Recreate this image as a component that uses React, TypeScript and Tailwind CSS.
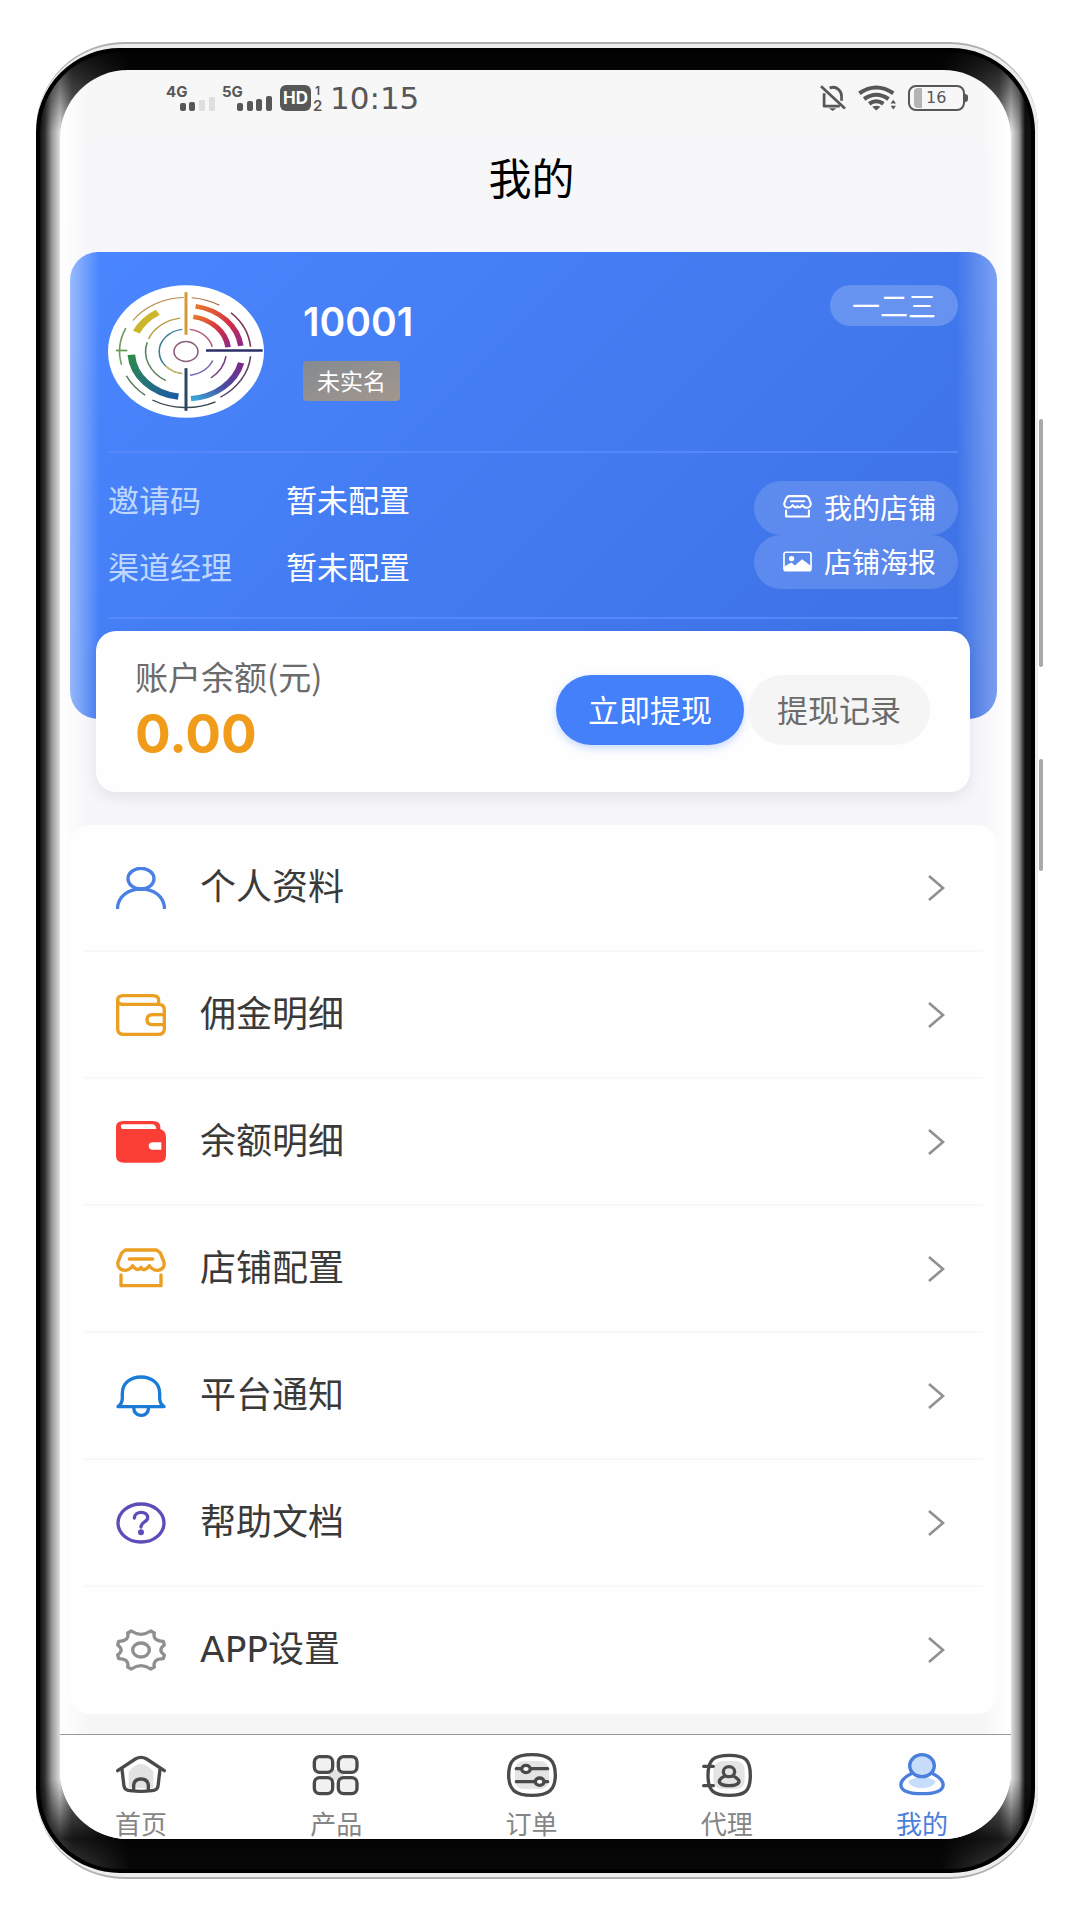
import type { ReactNode } from "react"

const strokeProps = {
  fill: "none",
  stroke: "currentColor",
  strokeWidth: 10,
  strokeLinecap: "round" as const,
  strokeLinejoin: "round" as const,
}

function arc(r: number, from: number, to: number) {
  const rad = Math.PI / 180
  const x0 = r * Math.cos(from * rad)
  const y0 = r * Math.sin(from * rad)
  const x1 = r * Math.cos(to * rad)
  const y1 = r * Math.sin(to * rad)
  return `M${x0} ${y0}A${r} ${r} 0 ${to - from > 180 ? 1 : 0} 1 ${x1} ${y1}`
}

function AvatarLogo() {
  return (
    <svg viewBox="-234 -199 468 398" className="h-[133px] w-[156px] shrink-0" aria-hidden="true">
      <defs>
        <linearGradient id="warm" x1="0" y1="0" x2="1" y2="1">
          <stop offset="0" stopColor="#e8772a" />
          <stop offset="0.6" stopColor="#cf2e48" />
          <stop offset="1" stopColor="#8c2a86" />
        </linearGradient>
        <linearGradient id="green" x1="0" y1="0" x2="1" y2="1">
          <stop offset="0" stopColor="#2f8a4a" />
          <stop offset="1" stopColor="#1b5aa8" />
        </linearGradient>
        <linearGradient id="violet" x1="0" y1="1" x2="1" y2="0">
          <stop offset="0" stopColor="#3aa9da" />
          <stop offset="0.5" stopColor="#4b4aa0" />
          <stop offset="1" stopColor="#7a2a86" />
        </linearGradient>
      </defs>
      <ellipse rx="234" ry="199" fill="#fff" />
      <g transform="scale(1.2 1)" fill="none">
        <circle r="30" stroke="#8d6080" strokeWidth="4" />
        <path d={arc(67, 98, 262)} stroke="#3c7f96" strokeWidth="4" />
        <path d={arc(67, 98, 140)} stroke="#d8bd54" strokeWidth="4" />
        <path d={arc(67, 278, 348)} stroke="#b5557c" strokeWidth="4" />
        <path d={arc(72, 22, 82)} stroke="#7668b4" strokeWidth="4" />
        <path d={arc(101, 120, 196)} stroke="#5c8560" strokeWidth="4" />
        <path d={arc(101, 202, 262)} stroke="#b3a14a" strokeWidth="4" />
        <path d={arc(101, 8, 52)} stroke="#76427f" strokeWidth="4" />
        <path d={arc(106, 280, 353)} stroke="url(#warm)" strokeWidth="14" />
        <path d={arc(138, 280, 353)} stroke="url(#warm)" strokeWidth="14" />
        <path d={arc(137, 205, 239)} stroke="#cdb62c" strokeWidth="19" />
        <path d={arc(137, 98, 176)} stroke="url(#green)" strokeWidth="19" />
        <path d={arc(142, 14, 85)} stroke="url(#violet)" strokeWidth="16" />
        <path d={arc(162, 215, 268)} stroke="#b88b4a" strokeWidth="3" />
        <path d={arc(162, 275, 301)} stroke="#a6653a" strokeWidth="3" />
        <path d={arc(162, 314, 355)} stroke="#7c3455" strokeWidth="4" />
        <path d={arc(162, 5, 58)} stroke="#5d4468" strokeWidth="4" />
        <path d={arc(168, 64, 120)} stroke="#37474f" strokeWidth="4" />
        <path d={arc(166, 128, 154)} stroke="#5a7a5a" strokeWidth="4" />
        <path d={arc(166, 166, 205)} stroke="#6f9a62" strokeWidth="4" />
      </g>
      <path d="M0 -178V-50" stroke="#d39a35" strokeWidth="9" />
      <path d="M60 -3H230" stroke="#2c2f6a" strokeWidth="8" />
      <path d="M0 50V178" stroke="#2b4562" strokeWidth="9" />
      <path d="M-210 -3H-176" stroke="#5f9a4c" strokeWidth="5" />
    </svg>
  )
}

function MenuIcon({ color, children }: { color: string; children: ReactNode }) {
  return (
    <svg viewBox="0 0 150 126" className={`h-[42px] w-[50px] shrink-0 ${color}`} aria-hidden="true">
      <g {...strokeProps}>{children}</g>
    </svg>
  )
}

function StorePaths() {
  return (
    <>
      <path d="M28 6H122L133 15 144 42C147 56 138 67 124 67 114 67 106 62 100 53 94 62 86 67 78 63L75 58 71 63C64 67 56 62 50 53 44 62 36 67 27 67 12 67 3 56 6 42L17 15Z" />
      <path d="M40 33H110" />
      <path d="M15 81V113H135V81" />
    </>
  )
}

const menu = [
  {
    label: "个人资料",
    color: "text-[#4a80e4]",
    icon: (
      <>
        <ellipse cx="75" cy="35" rx="39" ry="31" />
        <path d="M4 126C6 88 36 66 75 66S144 88 146 126" />
      </>
    ),
  },
  {
    label: "佣金明细",
    color: "text-[#eb9f22]",
    icon: (
      <>
        <path d="M128 31V18Q128 5 110 5H22Q5 5 5 18V104Q5 121 24 121H126Q145 121 145 104V48Q145 31 128 31H22Q5 31 5 18" />
        <path d="M145 62H112Q93 62 93 77T112 92H145" />
      </>
    ),
  },
  {
    label: "余额明细",
    color: "text-[#fb3f36]",
    icon: (
      <>
        <path
          d="M128 27V18Q128 5 110 5H22Q5 5 5 18V104Q5 120 24 120H126Q145 120 145 104V48Q145 31 128 27Z"
          fill="currentColor"
        />
        <path d="M18 24Q8 8 26 10H108Q120 10 121 24Z" fill="#fff" stroke="none" />
        <path d="M136 64H112Q98 64 98 75T112 86H136Z" fill="#fff" stroke="none" />
      </>
    ),
  },
  { label: "店铺配置", color: "text-[#eb9f22]", icon: <StorePaths /> },
  {
    label: "平台通知",
    color: "text-[#1b7bd6]",
    icon: (
      <>
        <path d="M6 95Q19 86 19 70V55C19 24 44 6 75 6S131 24 131 55V70Q131 86 144 95Z" />
        <path d="M53 97Q54 120 75 121T98 97" />
      </>
    ),
  },
  {
    label: "帮助文档",
    color: "text-[#5d4db8]",
    icon: (
      <>
        <ellipse cx="75" cy="63" rx="69" ry="57" />
        <path d="M55 48C56 25 95 26 95 47 95 60 75 60 75 75" />
        <circle cx="75" cy="91" r="4" fill="currentColor" />
      </>
    ),
  },
  {
    label: "APP设置",
    color: "text-[#8f8f8f]",
    icon: (
      <>
        <path d="M46 6Q75 26 104 6L115 12Q109 36 142 37L145 48Q124 63 145 78L142 89Q109 90 115 114L104 120Q75 100 46 120L35 114Q41 90 8 89L5 78Q26 63 5 48L8 37Q41 36 35 12Z" />
        <ellipse cx="75" cy="63" rx="25" ry="21" />
      </>
    ),
  },
]

const tabs = [
  {
    label: "首页",
    icon: (
      <>
        <path d="M38 56Q75 10 112 56V105H38Z" fill="#e2e2e2" stroke="none" />
        <path d="M5 53L58 18Q75 8 92 18L145 53" />
        <path d="M18 49L24 100Q26 112 42 113 75 117 108 113 124 112 126 100L132 49" />
        <path d="M53 112V96Q55 78 75 78T97 96V112" />
      </>
    ),
  },
  {
    label: "产品",
    icon: (
      <>
        <path d="M52 50H98V82H52Z" fill="#e2e2e2" stroke="none" />
        <rect x="10" y="11" width="55" height="47" rx="16" fill="#f1f1f1" />
        <rect x="82" y="11" width="56" height="47" rx="16" fill="#f1f1f1" />
        <rect x="10" y="74" width="55" height="48" rx="16" fill="#f1f1f1" />
        <rect x="82" y="74" width="56" height="48" rx="16" fill="#f1f1f1" />
      </>
    ),
  },
  {
    label: "订单",
    icon: (
      <>
        <rect x="24" y="24" width="102" height="84" rx="26" fill="#e4e4e4" stroke="none" />
        <path d="M75 5C126 5 145 22 145 66S126 127 75 127 5 110 5 66 24 5 75 5Z" />
        <path d="M28 47H122M28 86H122" />
        <ellipse cx="57" cy="48" rx="13" ry="11" fill="#fff" />
        <ellipse cx="98" cy="86" rx="13" ry="11" fill="#fff" />
      </>
    ),
  },
  {
    label: "代理",
    icon: (
      <>
        <rect x="34" y="24" width="94" height="84" rx="26" fill="#e4e4e4" stroke="none" />
        <path d="M82 7C130 7 145 20 145 67S130 127 82 127 18 114 18 67 34 7 82 7Z" />
        <path d="M5 40H34M5 98H34" />
        <ellipse cx="81" cy="56" rx="17" ry="15" />
        <path d="M67 70C40 84 52 98 81 98S124 84 95 70" />
      </>
    ),
  },
  {
    label: "我的",
    active: true,
    icon: (
      <>
        <path d="M34 84Q75 60 116 84 112 104 75 106 38 104 34 84Z" fill="#c7ddfb" stroke="none" />
        <path d="M42 62C-2 84-4 122 75 122S152 84 108 62" />
        <ellipse cx="75" cy="38" rx="37" ry="33" fill="#c7ddfb" />
      </>
    ),
  },
]

function StatusBar() {
  return (
    <div className="flex h-14 items-center justify-between pl-[106px] pr-[43px] text-[#575757]">
      <div className="flex items-center">
        <svg viewBox="0 0 160 27" className="h-[27px] w-[160px] overflow-visible" fill="currentColor" aria-hidden="true">
          <text x="0" y="12" fontSize="15" fontWeight="700" fontFamily="Inter, sans-serif">4G</text>
          <rect x="14" y="18" width="6" height="8" rx="2" />
          <rect x="23" y="17" width="6" height="9" rx="2" />
          <rect x="33" y="15" width="6" height="11" rx="1" fill="#dedede" />
          <rect x="43" y="12" width="6" height="14" rx="1" fill="#dedede" />
          <text x="56" y="12" fontSize="15" fontWeight="700" fontFamily="Inter, sans-serif">5G</text>
          <rect x="71" y="18" width="6" height="8" rx="2" />
          <rect x="81" y="16" width="6" height="10" rx="2" />
          <rect x="90" y="14" width="6" height="12" rx="2" />
          <rect x="100" y="11" width="6" height="15" rx="2" />
          <rect x="114" y="0" width="31" height="26" rx="6" />
          <text x="117" y="19" fontSize="17" fontWeight="700" fill="#fff" fontFamily="Inter, sans-serif">HD</text>
          <text x="149" y="10" fontSize="12" fontWeight="600" fontFamily="Inter, sans-serif">1</text>
          <text x="147" y="26" fontSize="15" fontWeight="600" fontFamily="Inter, sans-serif">2</text>
        </svg>
        <span className="pl-1 font-[DejaVu_Sans,sans-serif] text-[31px] leading-9">10:15</span>
      </div>
      <div className="flex items-center gap-3">
        <svg viewBox="0 0 76 76" className="h-[26px] w-[26px]" aria-hidden="true">
          <g {...strokeProps} strokeWidth="8" strokeLinecap="butt">
            <path d="M3 4L73 69" />
            <path d="M12 24V62H58" />
            <path d="M28 9Q42 3 53 12T63 36V46" />
          </g>
          <path d="M26 68H48L37 76Z" fill="currentColor" />
        </svg>
        <svg viewBox="0 0 112 76" className="h-[26px] w-[38px]" aria-hidden="true">
          <g {...strokeProps} strokeWidth="12" strokeLinecap="butt">
            <path d="M4 24Q54-10 104 24" />
            <path d="M18 41Q54 16 90 41" />
            <path d="M33 55Q54 40 75 55" />
          </g>
          <path d="M42 64Q54 58 66 64L54 75Z" fill="currentColor" />
          <path d="M96 54H112L104 43ZM96 61H112L104 72Z" fill="currentColor" />
        </svg>
        <div className="flex items-center">
          <div className="flex h-[26px] w-[57px] items-center rounded-lg border-2 border-current pl-1">
            <div className="h-5 w-2 rounded-l bg-[#b4b4b4]" />
            <span className="pl-1 font-[DejaVu_Sans,sans-serif] text-[16px] leading-5">16</span>
          </div>
          <div className="h-2 w-[3px] rounded-r bg-current" />
        </div>
      </div>
    </div>
  )
}

function ProfileCard() {
  return (
    <section className="rounded-[28px] bg-[linear-gradient(to_right,#ffffff70,#ffffff00_30px,#ffffff00_calc(100%-40px),#ffffff50),linear-gradient(135deg,#4a86ff,#447df3_40%,#3d70e4)] pb-[100px] pl-[38px] pr-[39px] pt-[33px] text-white">
      <div className="flex items-start">
        <AvatarLogo />
        <div className="ml-[39px] flex flex-1 flex-col items-start pt-[14px]">
          <span className="font-[Inter,sans-serif] text-[39px] font-semibold leading-[46px]">10001</span>
          <span className="mt-4 rounded bg-linear-to-br from-[#858a90] to-[#a3978e] px-[14px] pb-0.5 text-[23px] leading-[38px]">
            未实名
          </span>
        </div>
        <span className="rounded-full bg-white/20 px-[22px] text-[28px] leading-[41px]">一二三</span>
      </div>
      <div className="mt-[33px] flex h-[168px] items-center justify-between border-y-2 border-[#5488fb]">
        <dl className="grid grid-cols-[auto_auto] gap-x-[54px] pb-1.5 text-[31px] leading-[67px]">
          <dt className="text-[#bfd8ff]">邀请码</dt>
          <dd>暂未配置</dd>
          <dt className="text-[#bfd8ff]">渠道经理</dt>
          <dd>暂未配置</dd>
        </dl>
        <div className="flex flex-col text-[28px] leading-[52px]">
          <button type="button" className="flex items-center gap-3 rounded-full bg-white/15 pb-0.5 pl-[29px] pr-[22px]">
            <svg viewBox="0 0 150 126" className="h-[24px] w-[29px]" aria-hidden="true">
              <g {...strokeProps} strokeWidth="11">
                <StorePaths />
              </g>
            </svg>
            我的店铺
          </button>
          <button type="button" className="flex items-center gap-3 rounded-full bg-white/15 pb-0.5 pl-[29px] pr-[22px]">
            <svg viewBox="0 0 88 62" className="h-[21px] w-[29px]" aria-hidden="true">
              <rect x="3" y="3" width="82" height="56" rx="6" fill="none" stroke="currentColor" strokeWidth="5" />
              <circle cx="26" cy="22" r="8" fill="currentColor" />
              <path d="M4 58V46L25 34 36 43 58 24 84 44V58Z" fill="currentColor" />
            </svg>
            店铺海报
          </button>
        </div>
      </div>
    </section>
  )
}

function BalanceCard() {
  return (
    <section className="relative z-10 -mt-[88px] ml-[26px] mr-[27px] flex h-[161px] items-center justify-between rounded-[20px] bg-[#fefefe] pb-1 pl-[39px] pr-10 shadow-[0_6px_16px_rgba(0,0,0,0.08)]">
      <div className="pt-2">
        <div className="text-[33px] leading-9 text-[#6b6b6b]">账户余额(元)</div>
        <div className="pt-1 font-[Inter,sans-serif] text-[53px] font-bold leading-[72px] text-[#f09c1a]">0.00</div>
      </div>
      <div className="flex gap-1 text-[31px] leading-[68px]">
        <button
          type="button"
          className="rounded-full bg-[#4580fb] px-8 pb-0.5 text-white shadow-[0_3px_8px_rgba(69,128,251,0.3)]"
        >
          立即提现
        </button>
        <button type="button" className="rounded-full bg-[#f5f5f5] px-[29px] pb-0.5 text-[#6b6b6b]">
          提现记录
        </button>
      </div>
    </section>
  )
}

function MenuList() {
  return (
    <ul className="mt-[33px] rounded-[20px] bg-[#fefefe]">
      {menu.map((item) => (
        <li key={item.label} className="group px-[14px]">
          <a
            href="#"
            className="flex h-[127px] items-center border-b-2 border-[#f8f8f8] pl-8 pr-[38px] text-[#3a3a3a] group-last:border-transparent"
          >
            <MenuIcon color={item.color}>{item.icon}</MenuIcon>
            <span className="ml-[34px] flex-1 font-[DejaVu_Sans,Noto_Sans_CJK_SC,sans-serif] text-[36px]">
              {item.label}
            </span>
            <svg viewBox="0 0 18 28" className="h-7 w-[18px] text-[#909090]" aria-hidden="true">
              <path d="M2 2L16 14 2 26" fill="none" stroke="currentColor" strokeWidth="2.6" />
            </svg>
          </a>
        </li>
      ))}
    </ul>
  )
}

function TabBar() {
  return (
    <nav className="mt-5 flex justify-between rounded-b-[68px] border-t border-[#999] bg-[#fefefe] pb-0.5 pl-[33px] pr-[41px] pt-[18px]">
      {tabs.map((tab) => (
        <a
          key={tab.label}
          href="#"
          className={`flex w-24 flex-col items-center gap-3 ${tab.active ? "text-[#4a7fdc]" : "text-[#4a4a4a]"}`}
        >
          <svg viewBox="0 0 150 132" className="h-[44px] w-[50px]" aria-hidden="true">
            <g {...strokeProps}>{tab.icon}</g>
          </svg>
          <span className={`text-[26px] leading-7 ${tab.active ? "" : "text-[#858585]"}`}>{tab.label}</span>
        </a>
      ))}
    </nav>
  )
}

export default function App() {
  return (
    <div className="min-h-screen bg-white pb-[42px] pl-[36px] pr-[38px] pt-[42px] font-[Noto_Sans_CJK_SC,sans-serif]">
      <div className="relative mr-1 rounded-[88px] border-y-2 border-[#b0b0b0] bg-[#ededed] py-1 pr-[3px]">
        {/* power and volume keys */}
        <div className="absolute -right-[5px] top-[375px] h-[248px] w-1 rounded bg-[#a8a8a8]" />
        <div className="absolute -right-[5px] top-[715px] h-[112px] w-1 rounded bg-[#a8a8a8]" />
        <div className="rounded-[84px] border-4 border-black bg-[linear-gradient(#000000e0,#00000000_80px,#00000000_calc(100%-90px),#000000d0_calc(100%-30px),#00000080),linear-gradient(to_right,#111,#333_5px,#999_12px,#e0e0e0_20px,#777_32px,#0f0f0f_90px,#0f0f0f_calc(100%-90px),#777_calc(100%-32px),#e0e0e0_calc(100%-20px),#999_calc(100%-12px),#111_calc(100%-6px))] px-5 pb-[30px] pt-[18px]">
          <div className="rounded-[68px] bg-[linear-gradient(to_right,#ffffff,#ffffff00_30px,#ffffff00_calc(100%-30px),#ffffff),linear-gradient(#f7f7f7,#f6f6fb_200px,#f6f6fb_800px,#f6f6f6)]">
            <StatusBar />
            <h1 className="flex h-[106px] items-center justify-center pb-1.5 pr-2 text-[43px] text-black">我的</h1>
            <main className="pl-[10px] pr-[14px] pt-5">
              <ProfileCard />
              <BalanceCard />
              <MenuList />
            </main>
            <TabBar />
          </div>
        </div>
      </div>
    </div>
  )
}
